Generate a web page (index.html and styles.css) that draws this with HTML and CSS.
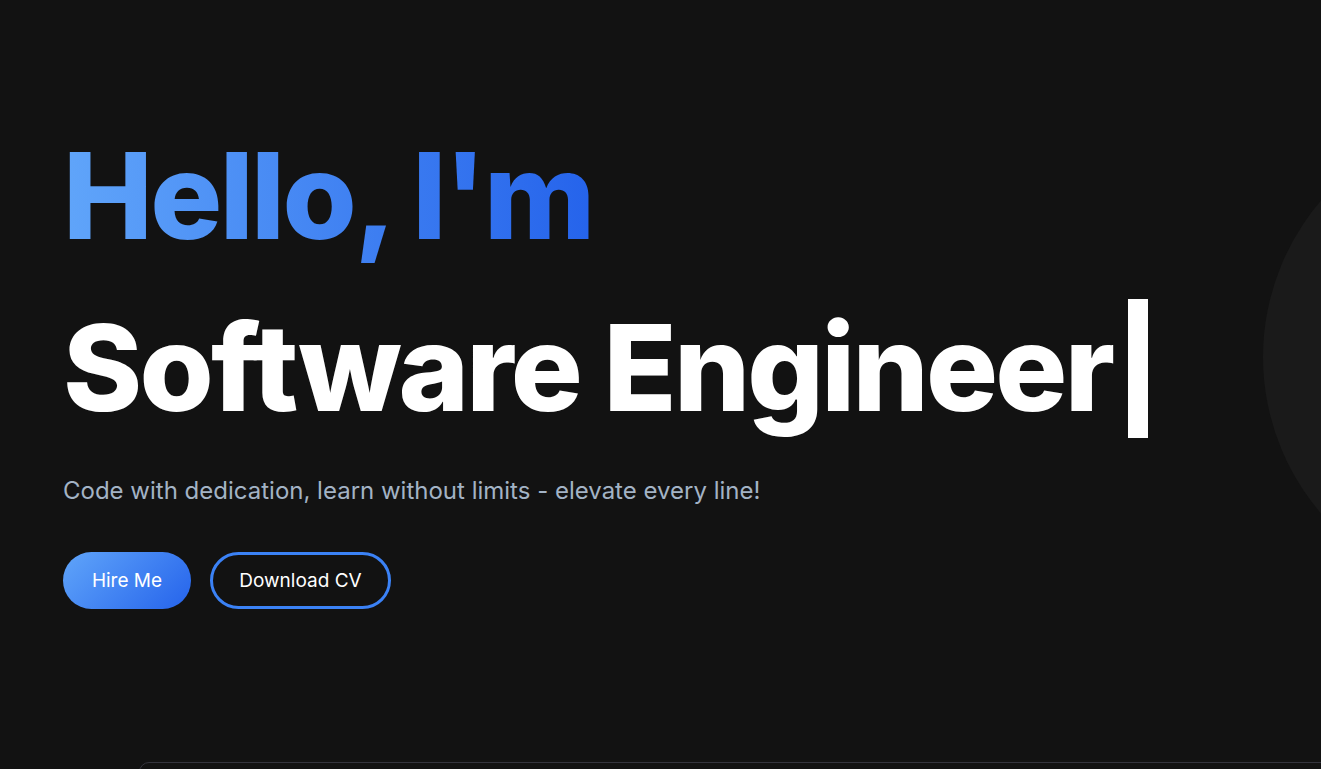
FILE: index.html
```html
<!DOCTYPE html>
<html lang="en">
<head>
<meta charset="utf-8">
<title>Portfolio</title>
<link rel="stylesheet" href="styles.css">
</head>
<body>
<main class="page">
  <div class="blob"></div>
  <section class="hero">
    <h1 class="hello">Hello, I'm</h1>
    <h2 class="role">Software Engineer<span class="cursor"></span></h2>
    <p class="tagline">Code with dedication, learn without limits - elevate every line!</p>
    <div class="actions">
      <a class="btn btn-primary" href="#">Hire Me</a>
      <a class="btn btn-outline" href="#">Download CV</a>
    </div>
  </section>
  <div class="card"></div>
</main>
</body>
</html>
```
FILE: styles.css
```css
* { box-sizing: border-box; }
html, body { margin: 0; padding: 0; }
body {
  background: #121212;
  color: #fff;
  font-family: Inter, "Noto Sans", sans-serif;
  overflow: hidden;
  height: 769px;
}
.page {
  position: relative;
  height: 769px;
  overflow: hidden;
}
.blob {
  position: absolute;
  left: 1263px;
  top: 117px;
  width: 480px;
  height: 480px;
  border-radius: 50%;
  background: #1a1a1a;
}
.hero {
  position: relative;
  padding: 124px 0 0 63px;
}
.hello {
  margin: 0;
  font-size: 120px;
  line-height: 144px;
  font-weight: 800;
  letter-spacing: -2.6px;
  background: linear-gradient(90deg, #60a5fa 0%, #2563eb 100%);
  -webkit-background-clip: text;
  background-clip: text;
  color: transparent;
  display: inline-block;
}
.role {
  margin: 28px 0 0;
  font-size: 120px;
  line-height: 144px;
  font-weight: 800;
  letter-spacing: -2.75px;
  color: #fff;
  display: flex;
  align-items: center;
}
.cursor {
  display: inline-block;
  width: 20px;
  height: 139px;
  background: #fff;
  margin-left: 16px;
}
.tagline {
  margin: 36px 0 0;
  font-size: 24px;
  line-height: 30px;
  color: #a3b3c5;
}
.actions {
  display: flex;
  gap: 19px;
  margin-top: 46px;
}
.btn {
  display: inline-flex;
  align-items: center;
  justify-content: center;
  height: 57px;
  border-radius: 999px;
  font-size: 19px;
  color: #fff;
  text-decoration: none;
}
.btn-primary {
  width: 128px;
  background: linear-gradient(135deg, #60a5fa 0%, #2563eb 100%);
}
.btn-outline {
  width: 181px;
  border: 3px solid #3b82f6;
  background: transparent;
}
.card {
  position: absolute;
  left: 139px;
  top: 762px;
  width: 1300px;
  height: 200px;
  border: 1px solid #34343d;
  border-radius: 10px;
}
```
